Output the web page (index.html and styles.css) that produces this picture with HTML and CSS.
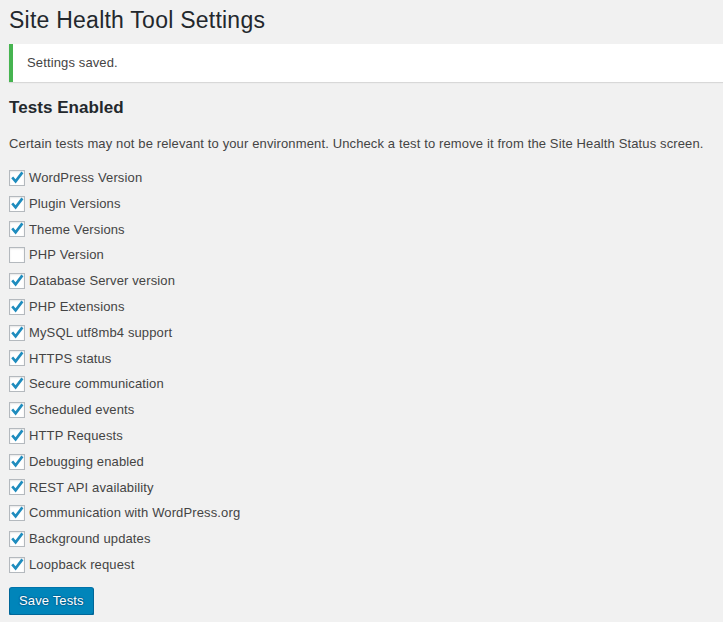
FILE: index.html
```html
<!DOCTYPE html>
<html lang="en">
<head>
<meta charset="utf-8">
<title>Site Health Tool Settings</title>
<link rel="stylesheet" href="styles.css">
</head>
<body>
<div class="wrap">
  <h1 class="page-title">Site Health Tool Settings</h1>
  <div class="notice"><p>Settings saved.</p></div>
  <h2 class="section-title">Tests Enabled</h2>
  <p class="intro">Certain tests may not be relevant to your environment. Uncheck a test to remove it from the Site Health Status screen.</p>
  <ul class="tests">
    <li class="test"><span class="cb checked"><svg viewBox="0 0 16 16"><path d="M3.2 7.4 L6.6 11.4 L13.4 2.4"/></svg></span><span class="lbl">WordPress Version</span></li>
    <li class="test"><span class="cb checked"><svg viewBox="0 0 16 16"><path d="M3.2 7.4 L6.6 11.4 L13.4 2.4"/></svg></span><span class="lbl">Plugin Versions</span></li>
    <li class="test"><span class="cb checked"><svg viewBox="0 0 16 16"><path d="M3.2 7.4 L6.6 11.4 L13.4 2.4"/></svg></span><span class="lbl">Theme Versions</span></li>
    <li class="test"><span class="cb"></span><span class="lbl">PHP Version</span></li>
    <li class="test"><span class="cb checked"><svg viewBox="0 0 16 16"><path d="M3.2 7.4 L6.6 11.4 L13.4 2.4"/></svg></span><span class="lbl">Database Server version</span></li>
    <li class="test"><span class="cb checked"><svg viewBox="0 0 16 16"><path d="M3.2 7.4 L6.6 11.4 L13.4 2.4"/></svg></span><span class="lbl">PHP Extensions</span></li>
    <li class="test"><span class="cb checked"><svg viewBox="0 0 16 16"><path d="M3.2 7.4 L6.6 11.4 L13.4 2.4"/></svg></span><span class="lbl">MySQL utf8mb4 support</span></li>
    <li class="test"><span class="cb checked"><svg viewBox="0 0 16 16"><path d="M3.2 7.4 L6.6 11.4 L13.4 2.4"/></svg></span><span class="lbl">HTTPS status</span></li>
    <li class="test"><span class="cb checked"><svg viewBox="0 0 16 16"><path d="M3.2 7.4 L6.6 11.4 L13.4 2.4"/></svg></span><span class="lbl">Secure communication</span></li>
    <li class="test"><span class="cb checked"><svg viewBox="0 0 16 16"><path d="M3.2 7.4 L6.6 11.4 L13.4 2.4"/></svg></span><span class="lbl">Scheduled events</span></li>
    <li class="test"><span class="cb checked"><svg viewBox="0 0 16 16"><path d="M3.2 7.4 L6.6 11.4 L13.4 2.4"/></svg></span><span class="lbl">HTTP Requests</span></li>
    <li class="test"><span class="cb checked"><svg viewBox="0 0 16 16"><path d="M3.2 7.4 L6.6 11.4 L13.4 2.4"/></svg></span><span class="lbl">Debugging enabled</span></li>
    <li class="test"><span class="cb checked"><svg viewBox="0 0 16 16"><path d="M3.2 7.4 L6.6 11.4 L13.4 2.4"/></svg></span><span class="lbl">REST API availability</span></li>
    <li class="test"><span class="cb checked"><svg viewBox="0 0 16 16"><path d="M3.2 7.4 L6.6 11.4 L13.4 2.4"/></svg></span><span class="lbl">Communication with WordPress.org</span></li>
    <li class="test"><span class="cb checked"><svg viewBox="0 0 16 16"><path d="M3.2 7.4 L6.6 11.4 L13.4 2.4"/></svg></span><span class="lbl">Background updates</span></li>
    <li class="test"><span class="cb checked"><svg viewBox="0 0 16 16"><path d="M3.2 7.4 L6.6 11.4 L13.4 2.4"/></svg></span><span class="lbl">Loopback request</span></li>
  </ul>
  <button class="btn-primary" type="button">Save Tests</button>
</div>
</body>
</html>
```
FILE: styles.css
```css
html, body {
  margin: 0;
  padding: 0;
  background: #f1f1f1;
}
body {
  font-family: "Liberation Sans", Arial, sans-serif;
  font-size: 13px;
  line-height: 1.5;
  color: #444;
  letter-spacing: 0.13px;
}
.wrap {
  padding: 6px 0 0 9px;
}
.page-title {
  margin: 0;
  font-size: 23px;
  font-weight: 400;
  line-height: 29px;
  color: #23282d;
  letter-spacing: 0.24px;
}
.notice {
  margin-top: 9px;
  height: 38px;
  box-sizing: border-box;
  background: #fff;
  border-left: 4px solid #46b450;
  box-shadow: 0 1px 1px 0 rgba(0, 0, 0, 0.1);
  display: flex;
  align-items: center;
  padding: 0 14px;
}
.notice p {
  margin: 0;
  color: #444;
}
.section-title {
  margin: 14.7px 0 0;
  font-size: 17px;
  font-weight: 700;
  line-height: 22px;
  color: #23282d;
  letter-spacing: 0.05px;
}
.intro {
  margin: 15.5px 0 0;
}
.tests {
  list-style: none;
  margin: 14.3px 0 0;
  padding: 0;
}
.test {
  display: flex;
  align-items: center;
  height: 19.5px;
  margin-bottom: 6.3px;
}
.cb {
  box-sizing: border-box;
  width: 16px;
  height: 16px;
  margin-right: 4px;
  border: 1px solid #b4b9be;
  background: #fff;
  box-shadow: inset 0 1px 2px rgba(0, 0, 0, 0.1);
  position: relative;
  flex: none;
}
.cb svg {
  position: absolute;
  left: -1px;
  top: -1px;
  width: 16px;
  height: 16px;
  overflow: visible;
}
.cb svg path {
  fill: none;
  stroke: #1e8cbe;
  stroke-width: 2.6;
  stroke-linecap: butt;
  stroke-linejoin: miter;
}
.lbl {
  color: #444;
}
.btn-primary {
  margin-top: 6.2px;
  height: 28px;
  box-sizing: border-box;
  padding: 0 9px 1px;
  font-family: "Liberation Sans", Arial, sans-serif;
  font-size: 13px;
  line-height: 26px;
  letter-spacing: 0.13px;
  color: #fff;
  background: #0085ba;
  border: 1px solid;
  border-color: #0073aa #006799 #006799;
  border-radius: 3px;
  box-shadow: 0 1px 0 #006799;
  text-shadow: 0 -1px 1px #006799, 1px 0 1px #006799, 0 1px 1px #006799, -1px 0 1px #006799;
  cursor: pointer;
}
```
